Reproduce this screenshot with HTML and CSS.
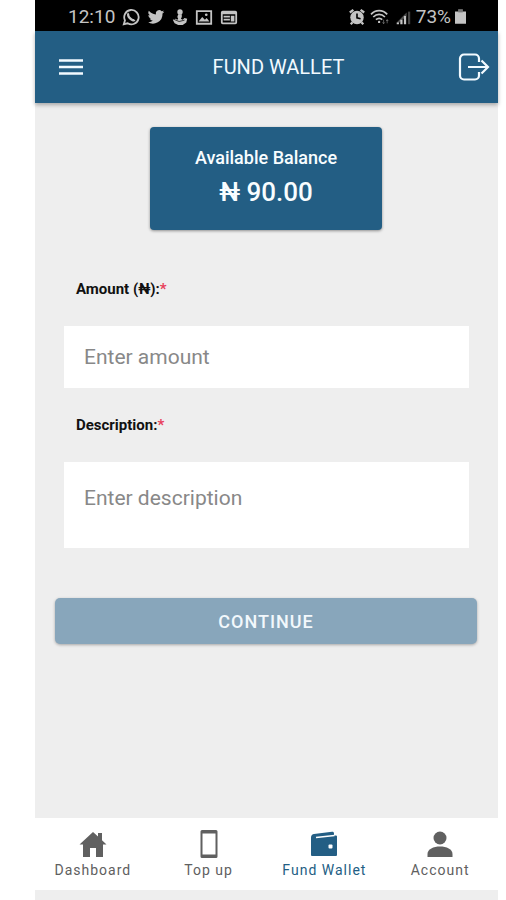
FILE: index.html
```html
<!DOCTYPE html>
<html lang="en">
<head>
<meta charset="utf-8">
<meta name="viewport" content="width=device-width, initial-scale=1">
<title>Fund Wallet</title>
<link rel="stylesheet" href="styles.css">
</head>
<body>
<div class="app">
  <div class="status">
    <div class="status-group">
      <span class="clock">12:10</span>
      <svg class="status-icon" viewBox="0 0 20 20" fill="none" stroke="currentColor" stroke-width="2"><path d="M2 18l1.300-4.300A8 8 0 1 1 6.300 17z"/><path d="M7.500 6c-1.500 1-.5 3.500 1.500 5.500s4 2.800 5 1.500" stroke-width="2.600"/></svg>
      <svg class="status-icon" viewBox="0 0 24 24" fill="currentColor"><path d="M23 5.100a9 9 0 0 1-2.600.7 4.500 4.500 0 0 0 2-2.500 9 9 0 0 1-2.900 1.100 4.500 4.500 0 0 0-7.700 4.100A12.800 12.800 0 0 1 2.500 3.800a4.500 4.500 0 0 0 1.400 6 4.500 4.500 0 0 1-2-.6 4.500 4.500 0 0 0 3.600 4.500 4.500 4.500 0 0 1-2 .1 4.500 4.500 0 0 0 4.200 3.100A9 9 0 0 1 1 18.800 12.800 12.800 0 0 0 20.700 7.400 9 9 0 0 0 23 5.100z"/></svg>
      <svg class="status-icon narrow" viewBox="0 0 16 20" fill="currentColor"><circle cx="8" cy="4.500" r="3"/><path d="M6 7h4v3l-1 2 2 1 2-2 3 1-1 4-4 3H6l-4-2-2-4 3-1 2 1 1-1-1-2z"/><path d="M1 12.500l6 2.500 6-1.500" fill="none" stroke="#000" stroke-width=".8"/></svg>
      <svg class="status-icon" viewBox="0 0 20 20" fill="currentColor"><path fill-rule="evenodd" d="M1 2.500h18v16H1zM3 4.500v12h14v-12z"/><path d="M4 15l4-5 3 3 2-2 3 4z"/><circle cx="12.500" cy="7.500" r="1.500"/></svg>
      <svg class="status-icon" viewBox="0 0 20 20" fill="currentColor"><path fill-rule="evenodd" d="M3 3h14a2 2 0 0 1 2 2v11a2 2 0 0 1-2 2H3a2 2 0 0 1-2-2V5a2 2 0 0 1 2-2zM3 7v9h14V7z"/><path d="M4 8.500h7v2H4zM4 12h7v2H4zM12 8.500h4V15h-4z"/></svg>
    </div>
    <div class="status-group status-right">
      <svg class="status-icon" viewBox="0 0 20 20"><path d="M2 5l4-3M18 5l-4-3M5 16l-2 2M15 16l2 2" stroke="currentColor" stroke-width="2.500"/><circle cx="10" cy="10.500" r="7.500" fill="currentColor"/><path d="M10 6v5l4 1" fill="none" stroke="#000" stroke-width="1.800"/></svg>
      <svg class="status-icon wifi" viewBox="0 0 22 20" fill="none" stroke="currentColor" stroke-width="1.900"><path d="M1 7c5-5.500 13-5.500 18 0M3.500 10c4-4 9-4 13 0M6.500 13c2-2 5-2 7 0"/><circle cx="10" cy="15.500" r="1.300" fill="currentColor" stroke="none"/><path d="M15 13v4M19 13v4M13.800 16l1.200 1.500 1.200-1.500M17.800 14.500l1.200-1.500 1.200 1.500" stroke-width="1" opacity=".5"/></svg>
      <svg class="status-icon" viewBox="0 0 20 20" fill="currentColor"><path d="M3 16h2.500v2H3zM7 13h2.500v5H7zM11 9h2.500v9H11z"/><path d="M15.500 4H18v14h-2.500z" opacity=".35"/><path d="M3 16l11-11v4L5 17z" opacity=".4"/></svg>
      <span class="clock">73%</span>
      <svg class="battery" viewBox="0 0 12 18" fill="currentColor"><path d="M3.500 1h5v2.500H12V17H0V3.500h3.500z"/><path d="M3.500 1h5v3.500h-5z" fill="#000" opacity=".4"/></svg>
    </div>
  </div>

  <header class="topbar">
    <button class="icon-button menu" type="button" aria-label="Menu"><svg width="24" height="24" viewBox="0 0 24 24" stroke="currentColor" stroke-width="2.600"><path d="M0 5.500h24M0 12h24M0 18.500h24"/></svg></button>
    <h1 class="title">FUND WALLET</h1>
    <button class="icon-button" type="button" aria-label="Log out"><svg width="32" height="28" viewBox="0 0 32 28" fill="none" stroke="currentColor" stroke-width="2.200"><path d="M21 9V5.500a4 4 0 0 0-4-4H6a4 4 0 0 0-4 4v17a4 4 0 0 0 4 4h11a4 4 0 0 0 4-4V19"/><path d="M10 14h20M23.500 7.500L30 14l-6.500 6.500"/></svg></button>
  </header>

  <main class="content">
    <section class="balance">
      <span class="balance-label">Available Balance</span>
      <span class="balance-value">₦ 90.00</span>
    </section>
    <form class="form">
      <label class="label" for="amount">Amount (₦):<span class="required">*</span></label>
      <input class="field" id="amount" type="text" inputmode="decimal" placeholder="Enter amount">
      <label class="label" for="description">Description:<span class="required">*</span></label>
      <textarea class="field field-area" id="description" placeholder="Enter description"></textarea>
      <button class="continue" type="submit" disabled>CONTINUE</button>
    </form>
  </main>

  <nav class="tabs">
    <a class="tab" href="#dashboard"><svg class="tab-icon" viewBox="0 0 28 28" fill="currentColor"><path d="M14 2l5 4.600V3h4v7.300l4.500 4.200H24V27h-7v-9h-6v9H4V14.500H.5z"/></svg>Dashboard</a>
    <a class="tab" href="#topup"><svg class="tab-icon" viewBox="0 0 28 28"><path fill="currentColor" fill-rule="evenodd" d="M7 0h14a1.500 1.500 0 0 1 1.500 1.500v25A1.500 1.500 0 0 1 21 28H7a1.500 1.500 0 0 1-1.500-1.500v-25A1.500 1.500 0 0 1 7 0zM7.500 3.500v21h13v-21z"/></svg>Top up</a>
    <a class="tab tab-active" href="#fund" aria-current="page"><svg class="tab-icon" viewBox="0 0 28 28"><path fill="currentColor" d="M1 7.500C1 5 2.500 4.300 4 4l18-2.200c1.300-.1 2 .5 2 1.700v2h2a1 1 0 0 1 1 1V25a1 1 0 0 1-1 1H2a1 1 0 0 1-1-1z"/><path d="M6 7.500L24.500 5.500" stroke="#fff" stroke-width="1.400"/><rect x="18.500" y="14.500" width="4" height="4" rx="1" fill="#fff"/></svg>Fund Wallet</a>
    <a class="tab" href="#account"><svg class="tab-icon" viewBox="0 0 28 28" fill="currentColor"><circle cx="14" cy="8" r="6.500"/><path d="M1.500 27v-3c0-5 6-7.500 12.500-7.500S26.500 19 26.500 24v3z"/></svg>Account</a>
  </nav>
</div>
</body>
</html>
```
FILE: styles.css
```css
* {
  box-sizing: border-box;
}

body {
  margin: 0;
  background: #fff;
  font-family: Roboto, "Liberation Sans", sans-serif;
}

button,
input,
textarea {
  font: inherit;
}

.app {
  display: flex;
  flex-direction: column;
  min-height: 100vh;
  margin: 0 8px 0 35px;
  padding-bottom: 10px;
  background: #eee;
}

.status {
  display: flex;
  justify-content: space-between;
  height: 31px;
  padding: 2px 32px 0 33px;
  background: #000;
  color: #c4c4c4;
}

.status-group {
  display: flex;
  align-items: center;
  gap: 7px;
}

.status-right {
  gap: 4px;
}

.clock {
  font-size: 19px;
}

.status-icon {
  width: 18px;
  height: 18px;
}

.status-icon.narrow {
  width: 16px;
}

.status-right .wifi {
  width: 20px;
}

.battery {
  width: 11px;
  height: 17px;
}

.topbar {
  display: grid;
  grid-template-columns: 48px 1fr 36px;
  align-items: center;
  height: 72px;
  padding: 0 6px 0 18px;
  background: #235e84;
  color: #f2faff;
  box-shadow: 0 2px 4px rgba(0, 0, 0, 0.3);
}

.icon-button {
  display: grid;
  place-items: center;
  width: 36px;
  padding: 0;
  border: 0;
  background: none;
  color: inherit;
}

.title {
  margin: 0;
  font-size: 20px;
  font-weight: 400;
  text-align: center;
}

.content {
  flex: 1;
  padding: 24px 21px 0 20px;
}

.balance {
  display: flex;
  flex-direction: column;
  align-items: center;
  gap: 4px;
  width: 55%;
  margin: 0 auto;
  padding: 19px 0 20px;
  border-radius: 4px;
  background: #235e84;
  color: #f8fdff;
  font-weight: 500;
  box-shadow: 0 1px 3px rgba(0, 0, 0, 0.4);
}

.balance-label {
  font-size: 18px;
  line-height: 24px;
}

.balance-value {
  font-size: 26px;
  line-height: 36px;
}

.form {
  display: flex;
  flex-direction: column;
  padding-top: 32px;
}

.label {
  padding: 16px 21px 26px;
  color: #111;
  font-size: 15px;
  font-weight: 700;
  line-height: 22px;
}

.required {
  color: #e8405a;
}

.field {
  height: 62px;
  margin: 0 8px 10px 9px;
  padding: 0 20px;
  border: 0;
  border-radius: 0;
  background: #fff;
  color: #333;
  font-size: 21px;
}

.field::placeholder {
  color: #888;
}

.field-area {
  height: 86px;
  padding: 24px 20px;
  line-height: 24px;
  resize: none;
}

.continue {
  height: 46px;
  margin-top: 40px;
  border: 0;
  border-radius: 5px;
  background: #88a6bb;
  color: #f2f8fc;
  font-size: 18px;
  font-weight: 500;
  letter-spacing: 1px;
  box-shadow: 0 1px 3px rgba(0, 0, 0, 0.3);
}

.tabs {
  display: grid;
  grid-template-columns: repeat(4, 1fr);
  height: 72px;
  background: #fff;
}

.tab {
  display: flex;
  flex-direction: column;
  align-items: center;
  gap: 2px;
  padding-top: 12px;
  color: #606060;
  font-size: 14px;
  line-height: 20px;
  letter-spacing: 1px;
  text-decoration: none;
}

.tab-active {
  color: #235e84;
}

.tab-icon {
  width: 28px;
  height: 28px;
}
```
